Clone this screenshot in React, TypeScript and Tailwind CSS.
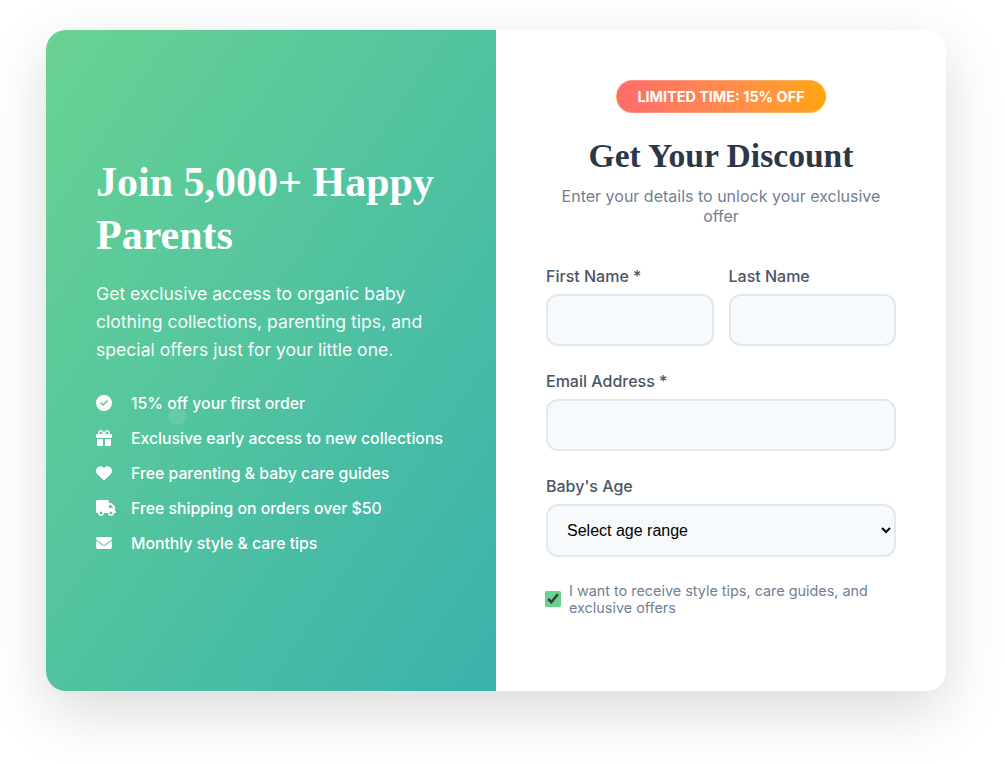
import { FaCircleCheck, FaGift, FaHeart, FaTruck, FaEnvelope } from "react-icons/fa6";

const SERIF = "font-['Liberation_Serif',serif]";

const perks = [
  { icon: FaCircleCheck, size: "h-4 w-4", text: "15% off your first order" },
  { icon: FaGift, size: "h-4 w-4", text: "Exclusive early access to new collections" },
  { icon: FaHeart, size: "h-4 w-4", text: "Free parenting & baby care guides" },
  { icon: FaTruck, size: "h-4 w-5", text: "Free shipping on orders over $50" },
  { icon: FaEnvelope, size: "h-4 w-4", text: "Monthly style & care tips" },
];

const inputClass = "block w-full h-[52px] rounded-xl border-2 border-[#e2e8f0] bg-[#f7fafc] px-[15px] text-base outline-none";
const labelClass = "mb-2 block h-[20px] text-base leading-[20px] font-medium text-[#4a5568]";

export default function App() {
  return (
    <div className="h-[764px] overflow-hidden bg-white pt-[30px] pl-[46px] font-['Inter',sans-serif]">
      <div className="flex h-[661px] w-[900px] overflow-hidden rounded-[20px] bg-white shadow-[0_20px_60px_rgba(0,0,0,0.15)]">
        {/* Left panel */}
        <div className="relative flex w-[450px] flex-col justify-center bg-gradient-to-br from-[#68d391] to-[#38b2ac] p-[50px] text-white">
          <div className="absolute top-[377px] left-[122px] h-[18px] w-[18px] rounded-full bg-white/10" />
          <h1 className={`mb-[18px] text-[42px] leading-[53px] font-bold ${SERIF}`}>Join 5,000+ Happy Parents</h1>
          <p className="mb-[30px] text-[17.6px] leading-[28px] opacity-95">
            Get exclusive access to organic baby clothing collections, parenting tips, and special offers just for your little one.
          </p>
          <ul className="mb-[12px] flex flex-col gap-[15px]">
            {perks.map((p) => (
              <li key={p.text} className="flex h-5 items-center text-[15.8px] leading-5 font-medium whitespace-nowrap">
                <span className="-mt-px flex w-[35px] shrink-0">
                  <p.icon className={p.size} />
                </span>
                {p.text}
              </li>
            ))}
          </ul>
        </div>

        {/* Form */}
        <div className="flex w-[450px] flex-col p-[50px]">
          <div className="mb-[15px] flex flex-col items-center text-center">
            <span className="mb-[21px] h-[33px] rounded-full border border-white/20 bg-gradient-to-r from-[#ff6b6b] to-[#ffa502] px-5 text-[14.4px] leading-[31px] font-bold text-white">
              LIMITED TIME: 15% OFF
            </span>
            <h2 className={`mb-[8px] text-[33.6px] leading-[44px] font-bold text-[#2d3748] ${SERIF}`}>Get Your Discount</h2>
            <p className="px-2 text-base leading-5 text-[#718096]">Enter your details to unlock your exclusive offer</p>
          </div>

          <div className="mt-[25px] mb-[25px] grid grid-cols-2 gap-[15px]">
            <div>
              <label className={labelClass}>First Name *</label>
              <input className={inputClass} />
            </div>
            <div>
              <label className={labelClass}>Last Name</label>
              <input className={inputClass} />
            </div>
          </div>

          <div className="mb-[25px]">
            <label className={labelClass}>Email Address *</label>
            <input type="email" className={inputClass} />
          </div>

          <div className="mb-[25px]">
            <label className={labelClass}>Baby's Age</label>
            <select className="block h-[53px] w-full rounded-xl border-2 border-[#e2e8f0] bg-[#f7fafc] px-[15px] font-['Liberation_Sans',sans-serif] text-base text-black outline-none">
              <option>Select age range</option>
            </select>
          </div>

          <div className="flex items-center">
            <input type="checkbox" defaultChecked className="mr-2 ml-[-1px] h-4 w-4 shrink-0 accent-[#68d391]" />
            <span className="text-[14.4px] leading-[17px] text-[#718096]">I want to receive style tips, care guides, and exclusive offers</span>
          </div>
        </div>
      </div>
    </div>
  );
}
